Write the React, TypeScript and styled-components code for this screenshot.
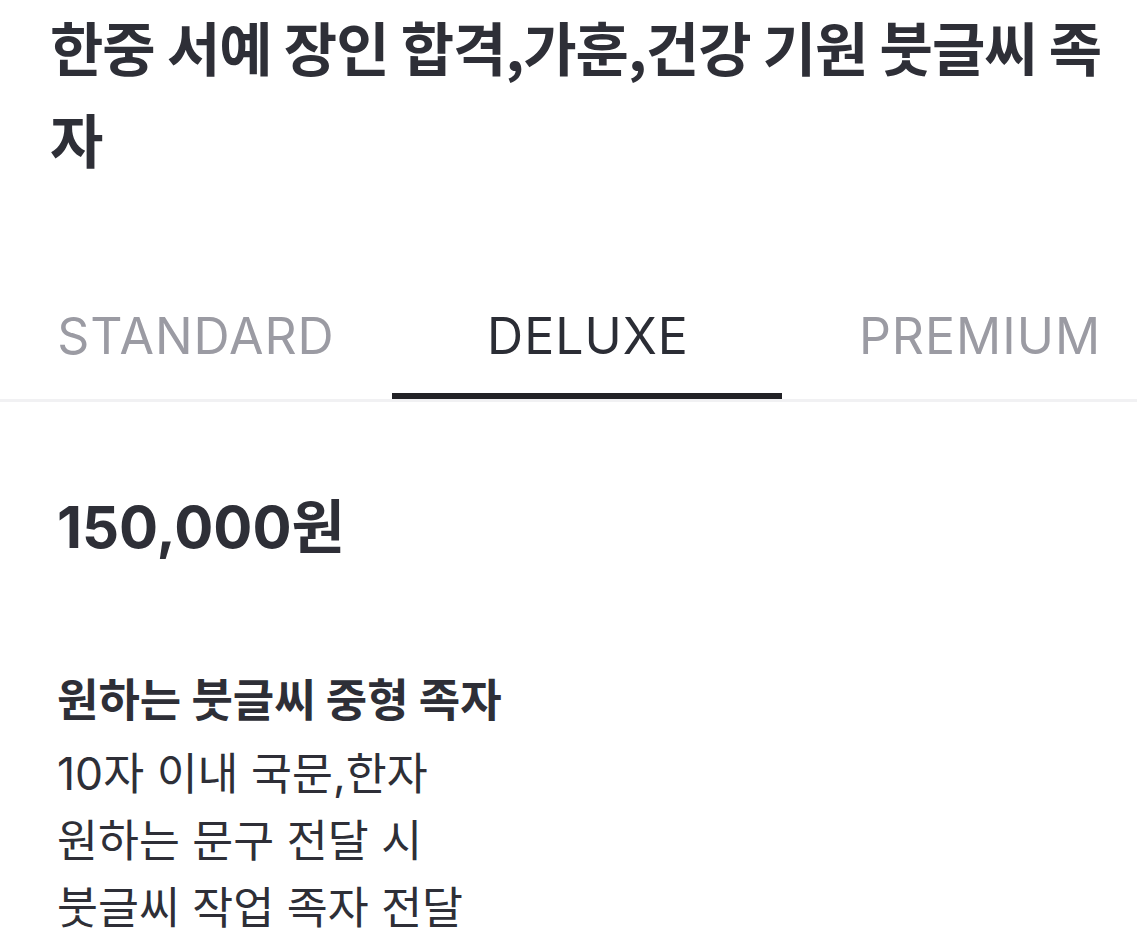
import React from "react";
import styled, { createGlobalStyle } from "styled-components";

const Global = createGlobalStyle`
  html, body { margin: 0; padding: 0; background: #fff; }
  body { overflow: hidden; font-family: Inter, "Noto Sans CJK KR", sans-serif; color: #2e2f37; }
`;

const Page = styled.div`
  width: 1137px;
  height: 947px;
  overflow: hidden;
  background: #fff;
`;

const Title = styled.h1`
  margin: 0;
  padding: 0 26px 0 50px;
  font-family: "Noto Sans CJK KR", sans-serif;
  font-size: 58px;
  font-weight: 700;
  line-height: 92px;
  letter-spacing: -1px;
  word-break: break-all;
  color: #2e2f37;
`;

const TabBar = styled.div`
  margin-top: 121px;
  display: flex;
  border-bottom: 3px solid #f1f1f3;
  overflow: hidden;
`;

const Tab = styled.div<{ $active?: boolean }>`
  position: relative;
  flex: 0 0 392px;
  text-align: center;
  padding-bottom: 32px;
  font-family: Inter, sans-serif;
  font-size: 50px;
  font-weight: 400;
  line-height: 62px;
  letter-spacing: 1px;
  color: ${(p) => (p.$active ? "#2b2d35" : "#9b9ba3")};
  &::after {
    content: "";
    display: ${(p) => (p.$active ? "block" : "none")};
    position: absolute;
    left: 0;
    right: 2px;
    bottom: -1px;
    height: 7px;
    background: #222226;
  }
`;

const Content = styled.div`
  padding: 0 0 0 57px;
`;

const Price = styled.div`
  margin-top: 93px;
  font-family: Inter, "Noto Sans CJK KR", sans-serif;
  font-size: 58px;
  font-weight: 700;
  line-height: 64px;
  color: #2e2f37;
`;

const OptionTitle = styled.div`
  margin-top: 114px;
  font-family: "Noto Sans CJK KR", sans-serif;
  font-size: 45px;
  font-weight: 700;
  line-height: 50px;
  color: #2e2f37;
`;

const Desc = styled.div`
  margin-top: 18px;
  font-family: Inter, "Noto Sans CJK KR", sans-serif;
  font-size: 44.5px;
  font-weight: 400;
  line-height: 67px;
  color: #2e2f37;
`;

export default function App() {
  return (
    <Page>
      <Global />
      <Title>한중 서예 장인 합격,가훈,건강 기원 붓글씨 족자</Title>
      <TabBar>
        <Tab>STANDARD</Tab>
        <Tab $active>DELUXE</Tab>
        <Tab>PREMIUM</Tab>
      </TabBar>
      <Content>
        <Price>150,000원</Price>
        <OptionTitle>원하는 붓글씨 중형 족자</OptionTitle>
        <Desc>
          10자 이내 국문,한자
          <br />
          원하는 문구 전달 시
          <br />
          붓글씨 작업 족자 전달
        </Desc>
      </Content>
    </Page>
  );
}
